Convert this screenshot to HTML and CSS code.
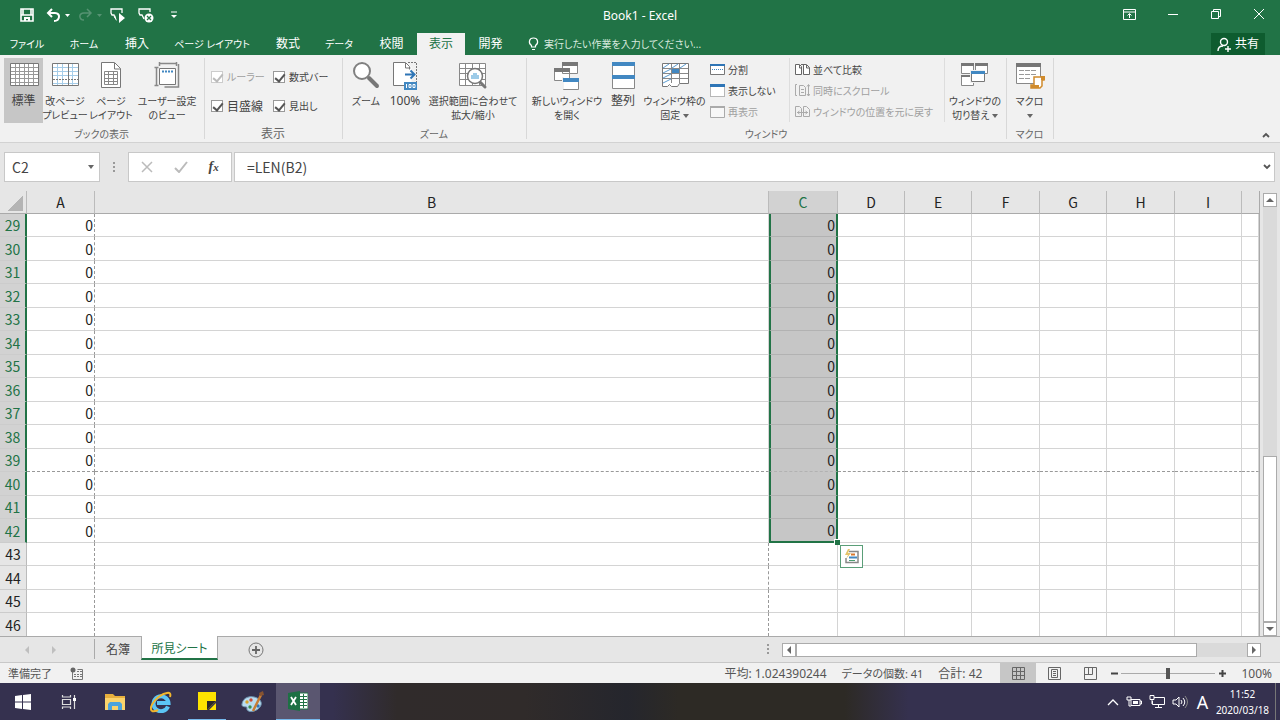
FILE: index.html
```html
<!DOCTYPE html>
<html lang="ja">
<head>
    <meta charset="utf-8">
    <title>Book1 - Excel</title>
    <meta name="viewport" content="width=device-width, initial-scale=1">
    <link rel="stylesheet" href="styles.css">
</head>
<body>

<header id="titlebar">
    <div class="quick">
        <button aria-label="上書き保存"><svg width="14" height="14" viewBox="0 0 14 14"><path d="M1 1h12v12H1z M1 7h12 M3 1v6 M11 1v6" fill="none" stroke="#fff" stroke-width="1.6"/><path d="M4 9h6v4H8v-2H6v2H4z" fill="#fff"/></svg></button>
        <button aria-label="元に戻す" class="wide"><svg width="24" height="14" viewBox="0 0 24 14"><path d="M6 1L2 5l4 4M2 5h7c6 0 5 8-1 8" fill="none" stroke="#fff" stroke-width="2"/><path d="M19 6h5l-2.500 3z" fill="#fff"/></svg></button>
        <button aria-label="やり直し" class="wide" disabled><svg width="24" height="14" viewBox="0 0 24 14"><path d="M9 1l4 4-4 4M13 5H6c-6 0-5 7 0 7" fill="none" stroke="#569373" stroke-width="1.500"/><path d="M19 6h5l-2.500 3z" fill="#569373"/></svg></button>
        <button aria-label="マクロの実行"><svg width="16" height="16" viewBox="0 0 16 16"><path d="M5 11L4 8H2L1 6V2h11v4" fill="none" stroke="#fff" stroke-width="1.300"/><path d="M5 8v4l2 2M9 6l6 5-6 5z" fill="#fff"/></svg></button>
        <button aria-label="マクロの停止" class="stop"><svg width="16" height="16" viewBox="0 0 16 16"><path d="M6 12L4 8H2L1 6V2h11v3" fill="none" stroke="#fff" stroke-width="1.300"/><circle cx="11" cy="11" r="4.500" fill="#fff"/><path d="M9 9l4 4M13 9l-4 4" stroke="#217346" stroke-width="1.300"/></svg></button>
        <button aria-label="クイック アクセス ツール バーのユーザー設定"><svg width="8" height="8" viewBox="0 0 8 8"><path d="M1 1h6" stroke="#fff"/><path d="M1 4h6L4 7z" fill="#fff"/></svg></button>
    </div>
    <h1>Book1 - Excel</h1>
    <div class="window-buttons">
        <button aria-label="リボンの表示オプション"><svg width="13" height="11" viewBox="0 0 13 11"><path d="M.5.5h12v10H.5zM1 3h12M6.500 9V5M4.500 6.500l2-2 2 2" fill="none" stroke="#fff"/></svg></button>
        <button aria-label="最小化"><svg width="10" height="10" viewBox="0 0 10 10"><path d="M0 5.500h10" stroke="#fff"/></svg></button>
        <button aria-label="元のサイズに戻す"><svg width="10" height="10" viewBox="0 0 10 10"><path d="M.5 2.500h7v7h-7zM2.500 2V.5h7v7H8" fill="none" stroke="#fff"/></svg></button>
        <button aria-label="閉じる"><svg width="10" height="10" viewBox="0 0 10 10"><path d="M0 0l10 10M10 0L0 10" stroke="#fff"/></svg></button>
    </div>
</header>

<nav id="tabs">
    <a href="#" class="small">ファイル</a>
    <a href="#" class="small">ホーム</a>
    <a href="#">挿入</a>
    <a href="#" class="small">ページ レイアウト</a>
    <a href="#">数式</a>
    <a href="#" class="small">データ</a>
    <a href="#">校閲</a>
    <a href="#" class="active">表示</a>
    <a href="#">開発</a>
    <a href="#" class="hint"><svg width="11" height="14" viewBox="0 0 11 14"><path d="M3.500 10V8.500C0 6 1 1 5.500 1S11 6 7.500 8.500V10zM4 12.500h3" fill="none" stroke="#fff" stroke-width="1.200"/></svg>実行したい作業を入力してください...</a>
    <button class="share"><svg width="14" height="15" viewBox="0 0 14 15"><circle cx="7" cy="5" r="3.500" fill="none" stroke="#fff" stroke-width="1.400"/><path d="M1 14c0-3 2-5 5-5M8 12h6M11 9v6" fill="none" stroke="#fff" stroke-width="1.400"/></svg>共有</button>
</nav>

<section id="ribbon">
    <div class="group views">
        <div class="group-body">
            <button class="big short pressed"><svg width="30" height="30" viewBox="0 0 30 30"><path d="M1.500 3.500h28v22h-28z" fill="#fff" stroke="#777"/><path d="M2 7.500h27M2 11.500h27M2 14.500h27M2 18.500h27M2 22.500h27M6.500 4v21M10.500 4v21M15.500 4v21M19.500 4v21M24.500 4v21" stroke="#999"/></svg><span>標準</span></button>
            <button class="big"><svg width="30" height="30" viewBox="0 0 30 30"><path d="M2.500 3.500h26v22h-26z" fill="#fff" stroke="#777"/><path d="M3 7.500h25M3 11.500h25M3 15.500h25M3 23.500h25M7.500 4v21M12.500 4v21M22.500 4v21" stroke="#a5cce8"/><path d="M18.500 4v21" stroke="#777"/><path d="M3 19.500h25" stroke="#777" stroke-dasharray="2 1"/></svg><span>改ページ<br>プレビュー</span></button>
            <button class="big"><svg width="30" height="30" viewBox="0 0 30 30"><path d="M5.500 2.500h13l6 6v19h-19z" fill="#fff" stroke="#777"/><path d="M18.500 3v6h6" fill="none" stroke="#777"/><path d="M8.500 11.500h13v13h-13zM9 14.500h12M9 18.500h12M9 21.500h12M12.500 12v12M17.500 12v12" fill="none" stroke="#888"/></svg><span>ページ<br>レイアウト</span></button>
            <button class="big"><svg width="30" height="30" viewBox="0 0 30 30"><path d="M7.500 8.500h16v16h-16z" fill="#fff" stroke="#777"/><path d="M10 11.500h11" stroke="#4288c2" stroke-width="2" stroke-dasharray="2 1"/><path d="M4.500 7v18M2.500 7.500h4M2.500 25.500h4M7 3.500h18M7.500 2v4M24.500 2v4M26.500 4v23h-14" fill="none" stroke="#888" stroke-width="1.500"/></svg><span>ユーザー設定<br>のビュー</span></button>
        </div>
        <div class="group-title">ブックの表示</div>
    </div>
    <div class="group">
        <div class="group-body checks">
            <label class="off"><input type="checkbox" checked disabled>ルーラー</label>
            <label><input type="checkbox" checked>数式バー</label>
            <label class="short"><input type="checkbox" checked>目盛線</label>
            <label><input type="checkbox" checked>見出し</label>
        </div>
        <div class="group-title short">表示</div>
    </div>
    <div class="group zoom">
        <div class="group-body">
            <button class="big"><svg width="30" height="30" viewBox="0 0 30 30"><path d="M18 18l8 8" stroke="#777" stroke-width="4" stroke-linecap="round"/><circle cx="11" cy="11" r="8" fill="#fff" stroke="#808080" stroke-width="2"/></svg><span>ズーム</span></button>
            <button class="big short"><svg width="30" height="30" viewBox="0 0 30 30"><path d="M3.500 2.500h13l5 5v18h-18z" fill="#fff"/><path d="M14 25.500H3.500v-23h12l4 4v3" fill="none" stroke="#777"/><path d="M15.500 3v5h5" fill="none" stroke="#777"/><path d="M18 2.500h8.500V22" fill="none" stroke="#777" stroke-dasharray="2 1"/><path d="M15 14.500h9M20.500 10.500l4 4-4 4" fill="none" stroke="#2e75b6" stroke-width="2"/><path d="M14 22h13v8H14z" fill="#4288c2"/><path d="M16.500 24v4M19 24.500h2v3h-2zM23 24.500h2v3h-2z" fill="none" stroke="#fff"/></svg><span>100%</span></button>
            <button class="big"><svg width="30" height="30" viewBox="0 0 30 30"><path d="M1.500 3.500h26v22h-26zM2 8.500h25M2 13.500h25M2 19.500h25M7.500 4v21M14.500 4v21M21.500 4v21" fill="#fff" stroke="#888"/><path d="M22 22l5 5" stroke="#777" stroke-width="3" stroke-linecap="round"/><circle cx="17" cy="16" r="7.500" fill="#fff" stroke="#777" stroke-width="1.500"/><path d="M13 15h8v4h-8zM15 13h4v2h-4z" fill="#9dcbe8"/></svg><span>選択範囲に合わせて<br>拡大/縮小</span></button>
        </div>
        <div class="group-title">ズーム</div>
    </div>
    <div class="group window">
        <div class="group-body">
            <button class="big"><svg width="30" height="30" viewBox="0 0 30 30"><path d="M10.500 3.500h15v10h-15zM2.500 9.500h15v11h-15zM11.500 19.500h15v10h-15z" fill="#fff" stroke="#888"/><path d="M10 2h16v4H10zM2 8h16v4H2z" fill="#777"/><path d="M10 17h2v12h-2z" fill="#f0f0f0"/><path d="M11 18h16v4H11z" fill="#4288c2"/></svg><span>新しいウィンドウ<br>を開く</span></button>
            <button class="big short"><svg width="30" height="30" viewBox="0 0 30 30"><path d="M4.500 2.500h22v26h-22z" fill="#fff" stroke="#888"/><path d="M4 2h23v4H4zM4 15h23v4H4z" fill="#4288c2"/></svg><span>整列</span></button>
            <button class="big"><svg width="30" height="30" viewBox="0 0 30 30"><path d="M2.500 3.500h26v20h-9l-2 3h-6l-2-2-2 2h-5z" fill="#fff" stroke="#777"/><path d="M3 8.500h25M3 13.500h25M3 18.500h25M11.500 4v19M19.500 4v19" stroke="#888"/><path d="M3 8l6-4M12 8l6-4M20 8l6-4M3 13l8-4M3 18l8-4M3 23l8-4" stroke="#5a9bd0"/><path d="M12 9h7v4h-7z" fill="#4288c2"/></svg><span>ウィンドウ枠の<br>固定 <i class="arrow"></i></span></button>
            <div class="list">
                <button><svg width="15" height="13" viewBox="0 0 15 13"><path d="M.5 1.500h14v10H.5z" fill="#fff" stroke="#777"/><path d="M0 1h15v2H0z" fill="#2e75b6"/><path d="M2 6.500h11" stroke="#4288c2" stroke-dasharray="1 1"/></svg>分割</button>
                <button><svg width="15" height="13" viewBox="0 0 15 13"><path d="M.5 1.500h14v11H.5z" fill="#fff" stroke="#777" stroke-dasharray="1 1"/><path d="M0 0h15v3H0z" fill="#2e75b6"/></svg>表示しない</button>
                <button disabled><svg width="15" height="13" viewBox="0 0 15 13"><path d="M.5 1.500h14v11H.5z" fill="#f7f7f7" stroke="#aaa"/><path d="M0 1h15v2H0z" fill="#aaa"/></svg>再表示</button>
            </div>
            <div class="list side">
                <button><svg width="15" height="13" viewBox="0 0 15 13"><path d="M.5 1.500h4l2 2v8h-6zM8.500 1.500h3l3 3v7h-6zM6 1.500h3M4.500 2v3h2M11.500 2v3h3" fill="#fff" stroke="#666"/></svg>並べて比較</button>
                <button disabled><svg width="15" height="13" viewBox="0 0 15 13"><path d="M2 .5H.5v11H2M4.500 1.500h4l2 2v8h-6zM6 5.500h3M6 8.500h3M13.500 1v11M12 2.500l1.500-2 1.500 2M12 10l1.500 2 1.500-2" fill="none" stroke="#aaa"/></svg>同時にスクロール</button>
                <button disabled><svg width="15" height="13" viewBox="0 0 15 13"><path d="M.5 1.500h4l2 2v8h-6zM8.500 1.500h3l3 3v7h-6zM2 7.500h11M4.500 6l-2 1.500 2 1.500M10.500 6l2 1.500-2 1.500" fill="none" stroke="#aaa"/></svg>ウィンドウの位置を元に戻す</button>
            </div>
            <button class="big"><svg width="30" height="30" viewBox="0 0 30 30"><path d="M1.500 3.500h12v10h-12zM15.500 3.500h12v10h-12zM1.500 15.500h12v10h-12z" fill="#fff" stroke="#888"/><path d="M1 3h13v3H1zM15 3h13v3H15zM1 15h10v2H1z" fill="#777"/><path d="M10 10h15v13H10z" fill="#f0f0f0"/><path d="M11.500 11.500h13v10h-13z" fill="#fff" stroke="#777"/><path d="M11 11h14v3H11z" fill="#4288c2"/></svg><span>ウィンドウの<br>切り替え <i class="arrow"></i></span></button>
        </div>
        <div class="group-title">ウィンドウ</div>
    </div>
    <div class="group macro">
        <div class="group-body">
            <button class="big"><svg width="30" height="30" viewBox="0 0 30 30"><path d="M1.500 3.500h24v20h-24z" fill="#fff" stroke="#888"/><path d="M1 3h25v4H1z" fill="#777"/><path d="M4 10.500h18M4 14.500h18M4 18.500h12" stroke="#999" stroke-dasharray="5 1"/><path d="M19 17h10v3h-2v6l-2 2h-9v-3h3z" fill="#fff" stroke="#d08b2c" stroke-width="1.500"/><path d="M16 25h8v3h-8zM26 16h4v4h-4z" fill="#d08b2c"/></svg><span>マクロ<br><i class="arrow"></i></span></button>
        </div>
        <div class="group-title">マクロ</div>
    </div>
    <button class="collapse" aria-label="リボンを折りたたむ"><svg width="8" height="6" viewBox="0 0 8 6"><path d="M1 5l3-3 3 3" fill="none" stroke="#555" stroke-width="1.800"/></svg></button>
</section>

<section id="formula-bar">
    <div class="name-box">
        <input type="text" value="C2" aria-label="名前ボックス">
        <i class="arrow"></i>
    </div>
    <span class="dots"></span>
    <div class="fx">
        <button aria-label="キャンセル"><svg width="12" height="12" viewBox="0 0 12 12"><path d="M1 1l10 10M11 1L1 11" stroke="#bbb" stroke-width="1.500"/></svg></button>
        <button aria-label="入力"><svg width="14" height="12" viewBox="0 0 14 12"><path d="M1 7l4 4 8-10" fill="none" stroke="#bbb" stroke-width="2"/></svg></button>
        <button class="fx-label">f<small>x</small></button>
    </div>
    <div class="formula">
        <input type="text" value="=LEN(B2)" aria-label="数式バー">
        <svg width="8" height="6" viewBox="0 0 8 6"><path d="M1 1l3 3 3-3" fill="none" stroke="#555" stroke-width="1.800"/></svg>
    </div>
</section>

<main>
    <table id="sheet">
        <colgroup>
            <col class="num"><col class="a"><col><col class="c"><col class="std"><col class="std"><col class="wide"><col class="std"><col class="wide"><col class="std"><col class="cut">
        </colgroup>
        <thead>
            <tr><th class="corner"></th><th>A</th><th>B</th><th class="picked">C</th><th>D</th><th>E</th><th>F</th><th>G</th><th>H</th><th>I</th><th></th></tr>
        </thead>
        <tbody id="rows"></tbody>
    </table>
    <div class="vscroll">
        <button aria-label="上へ"><i class="tri up"></i></button>
        <span class="track"><span class="thumb"></span></span>
        <button aria-label="下へ"><i class="tri down"></i></button>
    </div>
</main>

<section id="sheet-bar">
    <div class="arrows"><i class="tri left"></i><i class="tri right"></i></div>
    <a href="#">名簿</a>
    <a href="#" class="active">所見シート</a>
    <button class="add" aria-label="新しいシート"><svg width="16" height="16" viewBox="0 0 16 16"><circle cx="8" cy="8" r="7" fill="none" stroke="#777"/><path d="M8 4v8M4 8h8" stroke="#666" stroke-width="1.800"/></svg></button>
    <span class="dots"></span>
    <div class="hscroll">
        <button aria-label="左へ"><i class="tri left"></i></button>
        <span class="track"><span class="thumb"></span></span>
        <button aria-label="右へ"><i class="tri right"></i></button>
    </div>
</section>

<footer id="status">
    <span class="ready">準備完了</span>
    <svg class="rec" width="13" height="13" viewBox="0 0 13 13"><path d="M2.500 4.500v8h10v-10h-5" fill="none" stroke="#777"/><circle cx="3" cy="3" r="2.500" fill="#666"/><path d="M7 4.500h5M4 7.500h8M4 9.500h8" stroke="#777" stroke-dasharray="2 1"/></svg>
    <span class="stat">平均: 1.024390244</span>
    <span class="stat count">データの個数: 41</span>
    <span class="stat">合計: 42</span>
    <button class="mode on" aria-label="標準"><svg width="13" height="13" viewBox="0 0 13 13"><path d="M.5.5h12v12H.5zM4.500 1v11M8.500 1v11M1 4.500h11M1 8.500h11" fill="none" stroke="#666"/></svg></button>
    <button class="mode" aria-label="ページ レイアウト"><svg width="13" height="13" viewBox="0 0 13 13"><path d="M.5.5h12v12H.5zM3.500 2.500h6v8h-6zM5 4.500h3M5 6.500h3M5 8.500h3" fill="none" stroke="#666"/></svg></button>
    <button class="mode" aria-label="改ページ プレビュー"><svg width="13" height="13" viewBox="0 0 13 13"><path d="M.5.5h12v12H.5zM.5 7.500h8V.5M4.500 1v6" fill="none" stroke="#666"/></svg></button>
    <button class="step" aria-label="縮小"><svg width="7" height="7" viewBox="0 0 7 7"><path d="M0 3.500h7" stroke="#444" stroke-width="2"/></svg></button>
    <input type="range" min="0" max="100" value="50" aria-label="ズーム">
    <button class="step" aria-label="拡大"><svg width="7" height="7" viewBox="0 0 7 7"><path d="M0 3.500h7M3.500 0v7" stroke="#444" stroke-width="2"/></svg></button>
    <span class="percent">100%</span>
</footer>

<div id="taskbar">
    <button aria-label="スタート"><svg width="16" height="16" viewBox="0 0 16 16"><path d="M0 2l7-1v6.500H0zM8 1l8-1v7.500H8zM0 8.500h7V15l-7-1zM8 8.500h8V16l-8-1z" fill="#fff"/></svg></button>
    <button aria-label="タスク ビュー"><svg width="16" height="16" viewBox="0 0 16 16"><path d="M1.500 1v2h8V1M1.500 15v-2h8v2M1.500 5.500h8v5h-8zM13.500 1v3M13.500 7v8" fill="none" stroke="#ddd" stroke-width="1.200"/><path d="M12 4h3v3h-3z" fill="#fff"/></svg></button>
    <button aria-label="エクスプローラー"><svg width="20" height="18" viewBox="0 0 20 18"><path d="M0 1h8l2 2h10v14H0z" fill="#e8b03d"/><path d="M0 5h20v12H0z" fill="#fbd36b"/><path d="M3 17v-6l2-2h10l2 2v6h-4v-4H7v4z" fill="#4ba3dd"/></svg></button>
    <button aria-label="Internet Explorer"><svg width="22" height="22" viewBox="0 0 22 22"><path d="M18 15.500A7.500 7.500 0 1 1 18.500 12H7" fill="none" stroke="#5cc5f5" stroke-width="4"/><path d="M2 20c-4-4 5-16 15-18 3-.6 4 1 3 4M2 20c2 1 4 0 6-1" fill="none" stroke="#f2b62c" stroke-width="2"/></svg></button>
    <button class="running" aria-label="付箋"><svg width="18" height="18" viewBox="0 0 18 18"><path d="M0 0h18v9l-9 9H0z" fill="#fde300"/><path d="M9 9h9l-9 9z" fill="#2a2828"/><path d="M18 11v7h-7z" fill="#fde300"/></svg></button>
    <button aria-label="ペイント"><svg width="24" height="22" viewBox="0 0 24 22"><path d="M1 13C2 6 10 4 16 7c6 3 5 8 1 11-5 4-12 3-11-1 1-2-6 0-5-4z" fill="#b9dcf0" stroke="#7299b5"/><circle cx="6" cy="11" r="1.700" fill="#d9a32b"/><circle cx="10" cy="9" r="1.700" fill="#cc4c37"/><circle cx="9" cy="16" r="1.700" fill="#398f50"/><circle cx="17" cy="15" r="1.700" fill="#3273b8"/><path d="M12 20L20 4" stroke="#c77d35" stroke-width="2.500"/><path d="M19 5l-1-3 4-2 1 4z" fill="#875330"/></svg></button>
    <button class="running current" aria-label="Excel"><svg width="20" height="20" viewBox="0 0 20 20"><path d="M11 2h9v16h-9z" fill="#fff" stroke="#217346"/><path d="M12 5.500h7M12 8.500h7M12 11.500h7M12 14.500h7M15.500 3v14" stroke="#217346"/><path d="M0 2l12-2v20L0 18z" fill="#1d7044"/><path d="M3 6l5 8M8 6l-5 8" stroke="#fff" stroke-width="1.800"/></svg></button>
    <div class="tray">
        <svg width="12" height="8" viewBox="0 0 12 8"><path d="M1 7l5-5 5 5" fill="none" stroke="#fff" stroke-width="1.300"/></svg>
        <svg width="16" height="12" viewBox="0 0 16 12"><path d="M5 3.500h9v6H5zM14 5h1.500v3H14M1 1v3h4V1M2 0v2M4 0v2M3 4v6h2" fill="none" stroke="#fff"/><path d="M7 5h5v3H7z" fill="#fff"/></svg>
        <svg width="16" height="14" viewBox="0 0 16 14"><path d="M5 2.500h10.500v7h-12V6M6 12.500h7M9.500 10v2M1 .5h4v4H1zM3 5v4" fill="none" stroke="#fff"/></svg>
        <svg width="16" height="14" viewBox="0 0 16 14"><path d="M1 5h3l3-3v10L4 9H1zM9 5q2 2 0 4M11 3q3.500 4 0 8" fill="none" stroke="#fff"/><path d="M13 1q5 6 0 12" fill="none" stroke="#888"/></svg>
        <span class="ime">A</span>
    </div>
    <div class="clock">11:52<br>2020/03/18</div>
</div>

<script src="sheet.js"></script>
</body>
</html>
```
FILE: styles.css
```css
* {
    box-sizing: border-box;
}

body {
    margin: 0;
    min-height: 100vh;
    display: flex;
    flex-direction: column;
    background-color: #e6e6e6;
    color: #444;
    font-family: "Noto Sans", "Noto Sans CJK JP", sans-serif;
    font-size: 12px;
    font-feature-settings: "palt";
}

button {
    margin: 0;
    padding: 0;
    border: none;
    background: none;
    color: inherit;
    font: inherit;
    font-feature-settings: inherit;
}

input {
    margin: 0;
    font: inherit;
    color: inherit;
}

a {
    color: inherit;
    text-decoration: none;
}

svg {
    display: block;
    flex-shrink: 0;
}

/* title bar */
#titlebar {
    height: 31px;
    display: grid;
    grid-template-columns: 1fr auto 1fr;
    align-items: center;
    background-color: #217346;
    color: #fff;
}

#titlebar h1 {
    margin: 0;
    font-size: 12px;
    font-weight: normal;
}

.quick {
    display: flex;
    align-items: center;
    gap: 12px;
    padding-left: 20px;
    padding-bottom: 2px;
}

.quick .wide {
    margin-right: -4px;
}

.quick .stop {
    margin-right: 4px;
}

.window-buttons {
    display: flex;
    justify-content: flex-end;
    padding-bottom: 2px;
}

.window-buttons button {
    width: 43px;
    display: flex;
    justify-content: center;
}

/* ribbon tabs */
#tabs {
    height: 24px;
    display: grid;
    grid-template-columns: 54px 60px 46px 104px 48px 54px 51px 48px 51px 1fr auto;
    padding-right: 15px;
    background-color: #217346;
    color: #fff;
    line-height: 22px;
    text-align: center;
}

#tabs .active {
    background-color: #f1f1f1;
    color: #217346;
}

#tabs a {
    margin-top: 2px;
}

#tabs .small {
    font-size: 10px;
}

#tabs .hint {
    display: flex;
    align-items: center;
    gap: 5px;
    padding-left: 12px;
    font-size: 10px;
    color: #d9eadf;
}

.share {
    margin-top: 2px;
    width: 54px;
    display: flex;
    align-items: center;
    justify-content: center;
    gap: 4px;
    background-color: #0e5c2f;
}

/* ribbon */
#ribbon {
    height: 88px;
    display: flex;
    font-size: 10px;
    background-color: #f1f1f1;
    border-bottom: 1px solid #d2d2d2;
}

#ribbon .short {
    font-size: 12px;
}

.group {
    margin: 3px 0;
    padding-right: 1px;
    border-right: 1px solid #d8d8d8;
    display: flex;
    flex-direction: column;
    justify-content: space-between;
}

.group-body {
    height: 65px;
    display: flex;
}

.group-title {
    line-height: 10px;
    color: #666;
    text-align: center;
}

.big {
    height: 65px;
    display: flex;
    flex-direction: column;
    align-items: center;
    gap: 4px;
    padding-top: 2px;
    line-height: 14px;
    text-align: center;
    white-space: nowrap;
}

.pressed {
    background-color: #c6c6c6;
}

.views .group-body {
    display: grid;
    grid-template-columns: 39px 44px 48px 64px;
    padding: 0 4px;
}

.zoom .group-body {
    display: grid;
    grid-template-columns: 46px 32px 104px;
}

.window .group-body {
    display: grid;
    grid-template-columns: 80px 32px 71px 80px 155px 60px;
}

.macro .group-body {
    display: grid;
    grid-template-columns: 45px;
}

.checks {
    display: grid;
    grid-template-columns: 62px 68px;
    grid-template-rows: 29px 29px;
    padding: 4px 0 0 6px;
}

.checks label {
    display: flex;
    align-items: center;
    gap: 4px;
    white-space: nowrap;
}

.checks .off {
    color: #a0a0a0;
}

.checks input {
    appearance: none;
    width: 12px;
    height: 12px;
    border: 1px solid #999;
    background-color: #fff;
    position: relative;
}

.checks input:checked::before {
    content: "";
    position: absolute;
    left: 3px;
    top: 0;
    width: 4px;
    height: 8px;
    border: solid #555;
    border-width: 0 2px 2px 0;
    transform: rotate(40deg);
}

.checks input:disabled {
    border-color: #ccc;
}

.checks input:disabled::before {
    border-color: #bbb;
}

.list {
    height: 64px;
    padding-top: 1px;
    border-right: 1px solid #ddd;
}

.side {
    padding-left: 5px;
}

.list button {
    height: 21px;
    display: flex;
    align-items: center;
    gap: 3px;
    white-space: nowrap;
}

.list button:disabled {
    color: #a0a0a0;
}

.arrow {
    display: inline-block;
    vertical-align: middle;
    border: solid transparent;
    border-width: 4px 3px 0;
    border-top-color: #666;
}

.collapse {
    margin: auto 10px 4px auto;
}

/* formula bar */
#formula-bar {
    display: flex;
    padding: 9px 5px 9px 4px;
    height: 48px;
    font-family: "Noto Sans CJK JP", sans-serif;
    font-size: 14px;
}

.name-box, .fx, .formula {
    display: flex;
    align-items: center;
    background-color: #fff;
    border: 1px solid #c8c8c8;
}

#formula-bar input {
    min-width: 0;
    flex: 1;
    border: none;
    background: none;
    padding: 0;
}

.name-box {
    width: 96px;
    padding: 0 5px 0 7px;
}

.dots {
    width: 2px;
    height: 11px;
    margin: auto 13px;
    background: repeating-linear-gradient(#999 0 2px, transparent 2px 4px);
}

.fx {
    width: 104px;
    justify-content: space-around;
    padding: 0 2px;
}

.fx-label {
    font-family: "Liberation Serif", serif;
    font-size: 14px;
    font-style: italic;
    font-weight: bold;
}

.fx-label small {
    font-size: 11px;
}

.formula {
    flex: 1;
    margin-left: 2px;
    padding: 0 3px 0 12px;
}

/* grid */
main {
    flex: 1;
    display: flex;
    font-family: "Noto Sans CJK JP", sans-serif;
    font-size: 14px;
    color: #222;
}

#sheet {
    flex: 1;
    table-layout: fixed;
    border-collapse: separate;
    border-spacing: 0;
    background-color: #fff;
    border-right: 1px solid #aaa;
}

col.num { width: 27px; }
col.a, col.wide { width: 68px; }
col.c { width: 69px; }
col.std { width: 67px; }
col.cut { width: 17px; }

#sheet th {
    height: 23px;
    padding: 0;
    line-height: 20px;
    font-weight: normal;
    background-color: #e6e6e6;
    border-right: 1px solid #bbb;
    border-bottom: 1px solid #aaa;
}

#sheet thead th:last-child {
    border-right: none;
}

#sheet th.picked {
    background-color: #d2d2d2;
    color: #217346;
}

#sheet th.corner {
    background: linear-gradient(135deg, transparent 50%, #b4b4b4 50%) 7px 5px / 16px 15px no-repeat #e6e6e6;
}

#sheet tbody th {
    border-bottom-color: #ccc;
}

#sheet tbody th.picked {
    border-right: 2px solid #217346;
}

#sheet td {
    padding: 0 1px 0 0;
    line-height: 20px;
    text-align: right;
    border-right: 1px solid #d4d4d4;
    border-bottom: 1px solid #d4d4d4;
}

#sheet tbody th, #sheet td {
    height: 23px;
}

#sheet tbody tr:nth-child(even) th, #sheet tr:nth-child(even) td {
    height: 24px;
}

#sheet tbody tr:last-child th, #sheet tr:last-child td {
    height: 23px;
    border-bottom: none;
}

#sheet td.break-right {
    border-right: 1px dashed #999;
}

#sheet .break-below td {
    border-bottom: 1px dashed #999;
}

#sheet td.selected {
    position: relative;
    background-color: #c6c6c6;
    border-left: 2px solid #217346;
    border-right: 2px solid #217346;
    border-bottom-color: #b2b2b2;
}

#sheet td.last {
    border-bottom: 2px solid #217346;
}

.handle {
    position: absolute;
    right: -4px;
    bottom: -4px;
    width: 6px;
    height: 6px;
    border: solid #fff;
    border-width: 1px 0 0 1px;
    background-color: #217346;
}

.quick-analysis {
    position: absolute;
    left: 100%;
    top: 100%;
    margin: 4px;
    width: 23px;
    height: 23px;
    display: flex;
    align-items: center;
    justify-content: center;
    background-color: #fff;
    border: 1px solid #5a9e78;
    z-index: 1;
}

/* scroll bars */
.vscroll {
    width: 20px;
    padding: 2px 3px 0;
    display: flex;
    flex-direction: column;
}

.vscroll button, .hscroll button {
    width: 14px;
    height: 14px;
    display: flex;
    align-items: center;
    justify-content: center;
    background-color: #fff;
    border: 1px solid #ababab;
}

.track {
    flex: 1;
    display: flex;
    background-color: #dadada;
}

.thumb {
    background-color: #fff;
    border: 1px solid #ababab;
}

.vscroll .thumb {
    width: 14px;
    height: 40%;
    margin-top: auto;
}

.tri {
    border: 4px solid transparent;
}

.tri.up { border-top: none; border-bottom-color: #666; }
.tri.down { border-bottom: none; border-top-color: #666; }
.tri.left { border-left: none; border-right-color: #666; }
.tri.right { border-right: none; border-left-color: #666; }

/* sheet tabs */
#sheet-bar {
    height: 26px;
    display: flex;
    align-items: center;
    padding-right: 19px;
    border-top: 1px solid #aaa;
    font-family: "Noto Sans CJK JP", sans-serif;
}

#sheet-bar a {
    height: 20px;
    line-height: 20px;
    padding: 0 11px;
    margin-bottom: 2px;
    border-left: 1px solid #aaa;
}

#sheet-bar a.active {
    height: 24px;
    line-height: 23px;
    width: 77px;
    padding: 0;
    margin-bottom: 3px;
    text-align: center;
    background-color: #fff;
    color: #217346;
    border-right: 1px solid #aaa;
    border-bottom: 2px solid #217346;
}

.arrows {
    width: 94px;
    display: flex;
    gap: 23px;
    padding-left: 25px;
    opacity: 0.3;
}

.add {
    margin: 0 auto 0 30px;
}

.hscroll {
    width: 38%;
    display: flex;
    height: 14px;
}

.hscroll .thumb {
    width: 89%;
}

/* status bar */
#status {
    height: 21px;
    display: flex;
    align-items: center;
    background-color: #f1f1f1;
    border-top: 1px solid #c8c8c8;
    padding: 0 8px;
    color: #555;
}

.ready, .count {
    font-size: 11px;
}

.rec {
    margin: 0 auto 0 18px;
}

.stat {
    margin-right: 15px;
}

.mode {
    width: 36px;
    height: 20px;
    display: flex;
    align-items: center;
    justify-content: center;
}

.mode.on {
    margin-left: 3px;
    background-color: #c6c6c6;
}

.step {
    margin-left: 3px;
}

#status input {
    appearance: none;
    width: 94px;
    height: 12px;
    margin: 0 1px 0 3px;
    background: linear-gradient(#aaa, #aaa) center / 100% 1px no-repeat;
}

#status input::-webkit-slider-thumb {
    appearance: none;
    width: 4px;
    height: 11px;
    background-color: #555;
}

.percent {
    margin-left: 15px;
}

/* windows taskbar */
#taskbar {
    height: 38px;
    display: flex;
    background: linear-gradient(90deg, #35314f 26%, #302b2b 31%, #302b2a 41%, #25262d 49%, #2d2a25 53%, #2d2a25 66%, #35314f 71%);
    color: #fff;
}

#taskbar button {
    width: 46px;
    display: flex;
    align-items: center;
    justify-content: center;
}

#taskbar .running {
    border-bottom: 2px solid #76b9ed;
    width: 38px;
    margin: 0 4px;
}

#taskbar .current {
    width: 44px;
    margin: 0;
    background-color: #5a5670;
}

.tray {
    margin-left: auto;
    display: flex;
    align-items: center;
    gap: 7px;
}

.ime {
    width: 15px;
    font-size: 18px;
    text-align: center;
}

.clock {
    margin-right: 4px;
    padding: 3px 5px 0;
    width: 66px;
    border-right: 1px solid #777;
    font-size: 10px;
    line-height: 16px;
    text-align: center;
}
```
FILE: sheet.js
```js
// Rows 29-46, the selection runs down to row 42
const rows = document.getElementById('rows');

const handle = '<span class="handle"></span>' +
    '<button class="quick-analysis" aria-label="クイック分析"><svg width="15" height="15" viewBox="0 0 15 15">' +
    '<path d="M5 2.500h9v11H2V9" fill="none" stroke="#888" stroke-width="1.500"/>' +
    '<path d="M4 0L1 6h3L2 10l5-6H4l2-4z" fill="#e5c46b"/>' +
    '<path d="M7 5.500h4" stroke="#d8782f" stroke-width="2"/><path d="M5 8.500h8" stroke="#4288c2" stroke-width="2"/>' +
    '<path d="M5 11.500h6" stroke="#4a9e70"/></svg></button>';

for (let n = 29; n <= 46; n++) {
    const picked = n <= 42;
    const tr = document.createElement('tr');
    if (n === 39) tr.className = 'break-below';

    let html = picked ? `<th class="picked">${n}</th>` : `<th>${n}</th>`;
    html += `<td class="break-right">${picked ? 0 : ''}</td>`;
    html += picked ? '<td></td>' : '<td class="break-right"></td>';
    html += picked ? `<td class="selected${n === 42 ? ' last' : ''}">0${n === 42 ? handle : ''}</td>` : '<td></td>';
    html += '<td></td>'.repeat(7);

    tr.innerHTML = html;
    rows.appendChild(tr);
}
```
